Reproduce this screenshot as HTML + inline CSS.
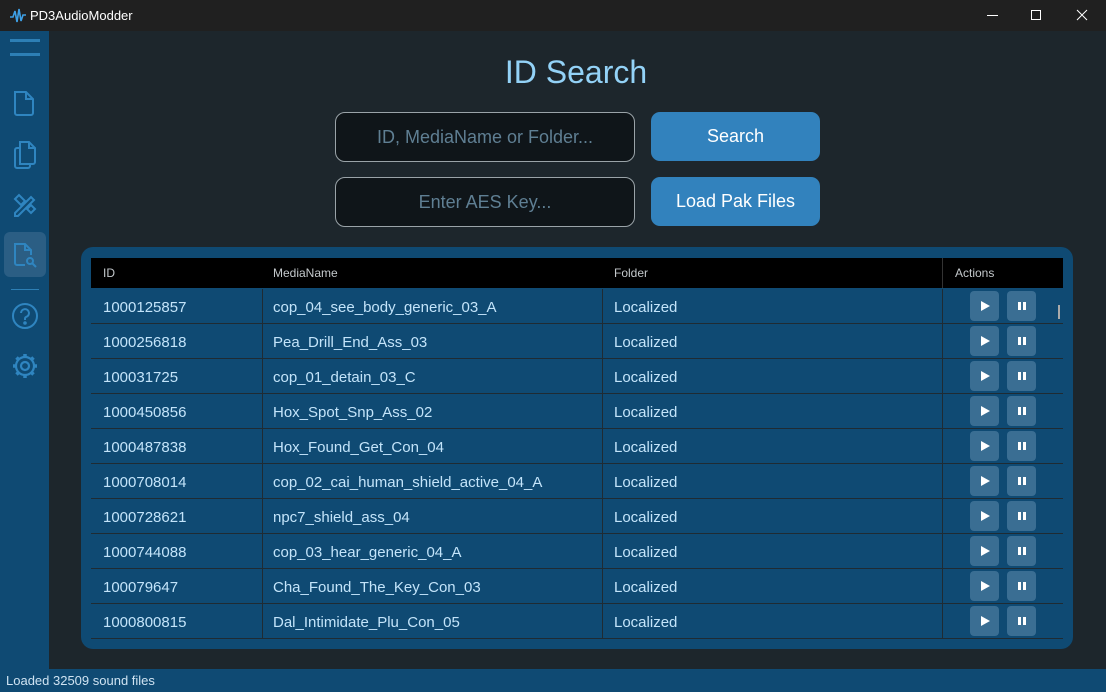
<!DOCTYPE html>
<html><head><meta charset="utf-8"><style>
*{margin:0;padding:0;box-sizing:border-box}
body{width:1106px;height:692px;overflow:hidden;background:#1d262c;font-family:"Liberation Sans",sans-serif;position:relative}
.tb{position:absolute;left:0;top:0;width:1106px;height:31px;background:#202020;color:#fff;font-size:13px}
.side{position:absolute;left:0;top:31px;width:49px;height:638px;background:#0f4a73}
.status{position:absolute;left:0;top:669px;width:1106px;height:23px;background:#0f4a73;color:#cfe3f2;font-size:13px;padding:4px 6px}
.title{position:absolute;left:0;width:1152px;top:54px;text-align:center;color:#93d2f7;font-size:32px}
.inp{position:absolute;left:335px;width:300px;height:50px;border:1px solid #9aa3a8;border-radius:10px;background:#0f1519;color:#5f7f93;font-size:18px;text-align:center;line-height:48px}
.btn{position:absolute;left:651px;width:169px;height:49px;border-radius:9px;background:#3282bd;color:#fff;font-size:18px;text-align:center;line-height:49px}
.card{position:absolute;left:81px;top:247px;width:992px;height:402px;background:#0f4a73;border-radius:12px}
.hdr{position:absolute;left:91px;top:258px;width:972px;height:30px;background:#000;color:#c4c9cc;font-size:12px}
.hdr span,.row span{position:absolute;top:0}
.row{position:absolute;left:91px;width:972px;height:35px;border-bottom:1px solid #1f2b33;color:#c3e4fa;font-size:15px;line-height:37px}
.vl{position:absolute;top:0;width:1px;height:100%;background:#1f2b33}
.pb{position:absolute;top:2px;width:29px;height:30px;background:#3a6e93;border-radius:4px}
</style></head><body>
<div class="tb">
<svg style="position:absolute;left:9px;top:7px" width="18" height="18" viewBox="0 0 18 18"><path d="M1 10h3l2-6 2 11 2-13 2 12 2-6h3" fill="none" stroke="#3ea0e6" stroke-width="1.6"/></svg>
<span style="position:absolute;left:30px;top:8px">PD3AudioModder</span>
<div style="position:absolute;left:987px;top:15px;width:11px;height:1px;background:#fff"></div>
<div style="position:absolute;left:1031px;top:10px;width:10px;height:10px;border:1px solid #fff"></div>
<svg style="position:absolute;left:1076px;top:9px" width="12" height="12"><path d="M1 1L11 11M11 1L1 11" stroke="#fff" stroke-width="1"/></svg>
</div>
<div class="side">
<div style="position:absolute;left:10px;top:8px;width:30px;height:3px;background:#2d7fb5"></div>
<div style="position:absolute;left:10px;top:22px;width:30px;height:3px;background:#2d7fb5"></div>
<svg style="position:absolute;left:12px;top:58px" width="24" height="28" viewBox="0 0 24 28" fill="none" stroke="#2f85c0" stroke-width="2"><path d="M3 3h11l7 7v14a2 2 0 0 1-2 2H5a2 2 0 0 1-2-2z M14 3v7h7"/></svg>
<svg style="position:absolute;left:12px;top:109px" width="26" height="30" viewBox="0 0 26 30" fill="none" stroke="#2f85c0" stroke-width="2"><path d="M8 2h9l6 6v14a2 2 0 0 1-2 2H8z M17 2v6h6 M8 8H5a2 2 0 0 0-2 2v16a2 2 0 0 0 2 2h11a2 2 0 0 0 2-2v-2"/></svg>
<svg style="position:absolute;left:11px;top:160px" width="28" height="28" viewBox="0 0 28 28" fill="none" stroke="#2f85c0" stroke-width="2"><path d="M4 22L20 6l3 3L7 25H4z M4 8l4-4 6 6-4 4z M16 18l4-4 4 4-4 4z"/></svg>
<div style="position:absolute;left:4px;top:201px;width:42px;height:45px;background:#2b5e84;border-radius:6px"></div>
<svg style="position:absolute;left:13px;top:210px" width="26" height="28" viewBox="0 0 26 28" fill="none" stroke="#2f85c0" stroke-width="2"><path d="M12 24H4a2 2 0 0 1-2-2V3h10l6 6v5 M12 3v6h6"/><circle cx="17" cy="20" r="3"/><path d="M19 22l4 4"/></svg>
<div style="position:absolute;left:11px;top:258px;width:28px;height:1px;background:#2d7fb5"></div>
<svg style="position:absolute;left:11px;top:271px" width="28" height="28" viewBox="0 0 28 28" fill="none" stroke="#2f85c0" stroke-width="2"><circle cx="14" cy="14" r="12"/><path d="M10 11a4 4 0 1 1 5 4c-1 .5-1 1-1 3"/><circle cx="14" cy="21" r=".8" fill="#2f85c0"/></svg>
<svg style="position:absolute;left:11px;top:321px" width="28" height="28" viewBox="0 0 28 28" fill="none" stroke="#2f85c0" stroke-width="2.2"><circle cx="14" cy="14" r="4"/><circle cx="14" cy="14" r="9"/><path d="M14 2v3M14 23v3M2 14h3M23 14h3M5.5 5.5l2 2M20.5 20.5l2 2M5.5 22.5l2-2M20.5 7.5l2-2" stroke-width="3.5"/></svg>
</div>
<div class="title">ID Search</div>
<div class="inp" style="top:112px">ID, MediaName or Folder...</div>
<div class="btn" style="top:112px">Search</div>
<div class="inp" style="top:177px">Enter AES Key...</div>
<div class="btn" style="top:177px">Load Pak Files</div>
<div class="card"></div>
<div class="hdr"><span style="left:12px;top:8px">ID</span><span style="left:182px;top:8px">MediaName</span><span style="left:523px;top:8px">Folder</span><span style="left:864px;top:8px">Actions</span><div class="vl" style="left:851px;background:#333"></div></div>
<div id="rows"></div>
<div style="position:absolute;left:1058px;top:305px;width:2px;height:14px;background:#aaa"></div>
<div class="status">Loaded 32509 sound files</div>
<script>
var d=[["1000125857","cop_04_see_body_generic_03_A"],["1000256818","Pea_Drill_End_Ass_03"],["100031725","cop_01_detain_03_C"],["1000450856","Hox_Spot_Snp_Ass_02"],["1000487838","Hox_Found_Get_Con_04"],["1000708014","cop_02_cai_human_shield_active_04_A"],["1000728621","npc7_shield_ass_04"],["1000744088","cop_03_hear_generic_04_A"],["100079647","Cha_Found_The_Key_Con_03"],["1000800815","Dal_Intimidate_Plu_Con_05"]];
var h="";d.forEach(function(r,i){h+='<div class="row" style="top:'+(289+i*35)+'px"><span style="left:12px">'+r[0]+'</span><div class="vl" style="left:171px"></div><span style="left:182px">'+r[1]+'</span><div class="vl" style="left:511px"></div><span style="left:523px">Localized</span><div class="vl" style="left:851px"></div><div class="pb" style="left:879px"><svg width="29" height="30"><path d="M11 10l9 5-9 5z" fill="#fff"/></svg></div><div class="pb" style="left:916px"><svg width="29" height="30"><rect x="11" y="11" width="3" height="8" fill="#fff"/><rect x="16" y="11" width="3" height="8" fill="#fff"/></svg></div></div>'});
document.getElementById("rows").innerHTML=h;
</script>
</body></html>
